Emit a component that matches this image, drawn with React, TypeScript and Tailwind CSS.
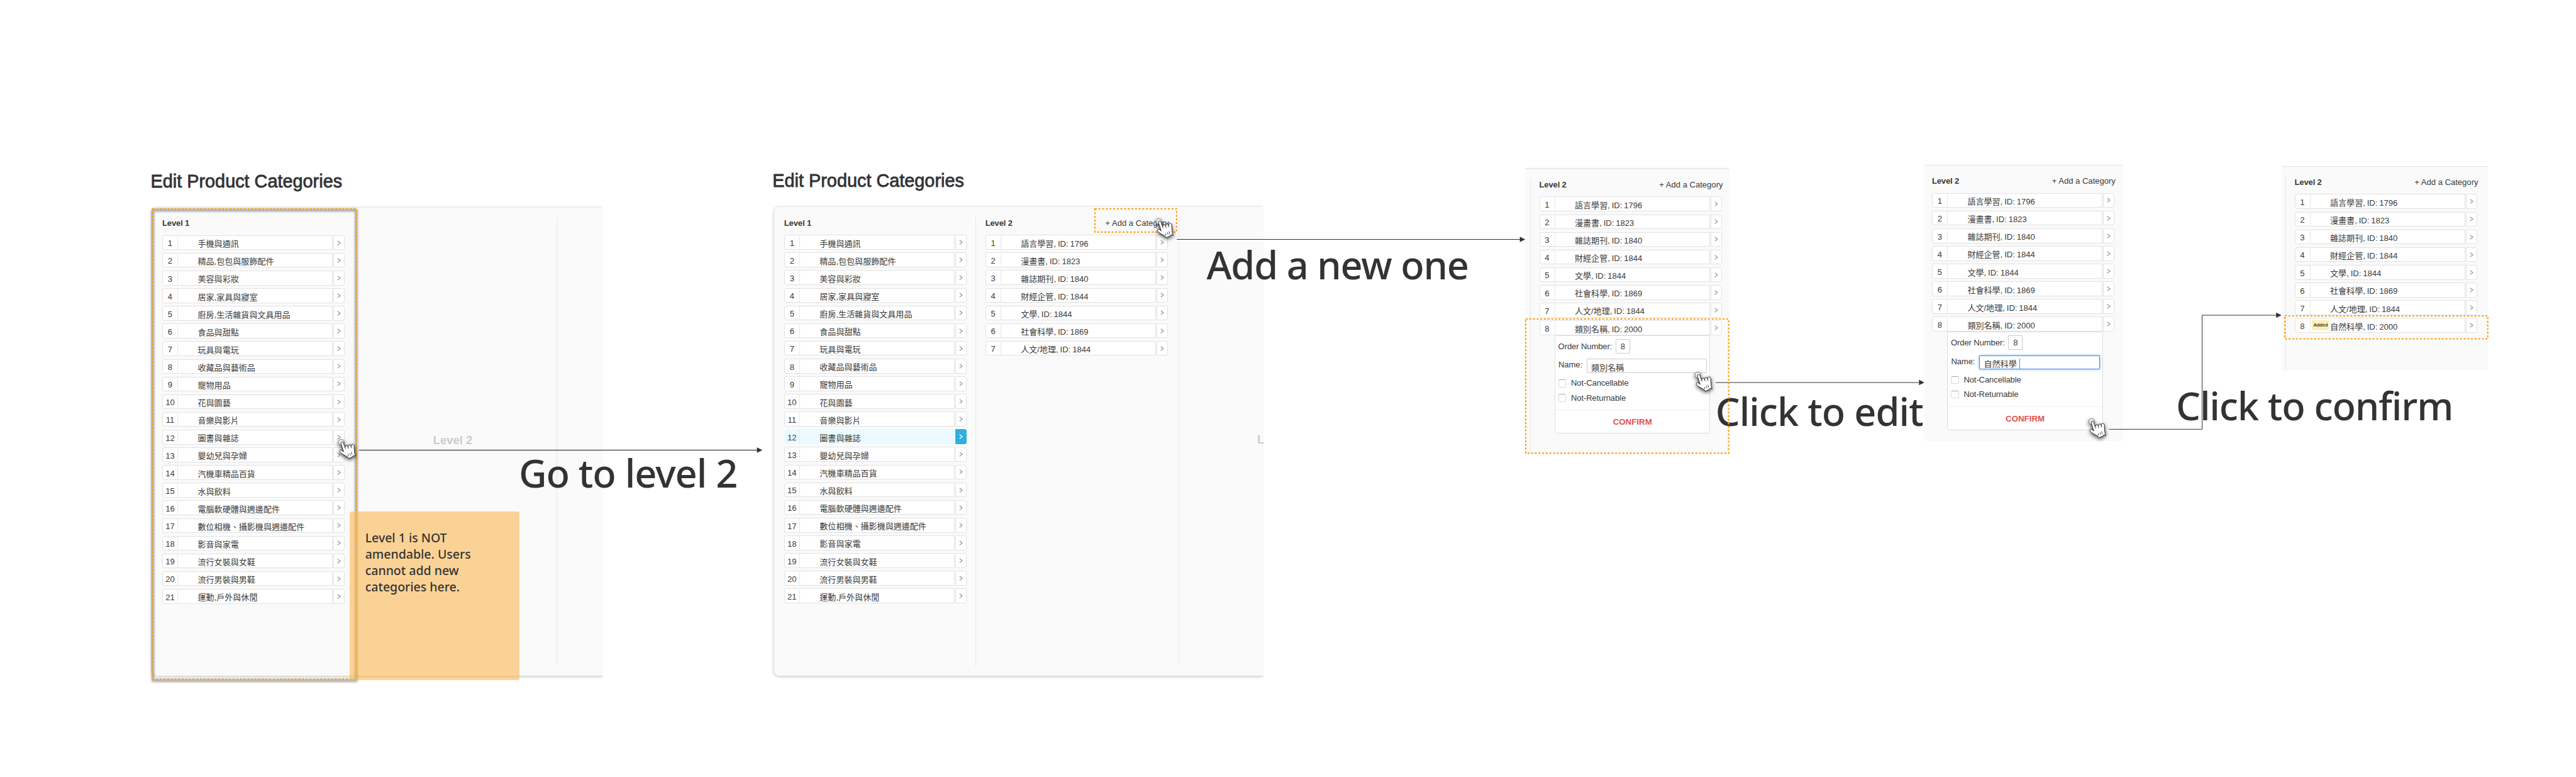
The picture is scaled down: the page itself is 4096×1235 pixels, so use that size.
import type { ReactNode } from "react";

const LEVEL_1 = [
  "手機與通訊",
  "精品,包包與服飾配件",
  "美容與彩妝",
  "居家,家具與寢室",
  "廚房,生活雜貨與文具用品",
  "食品與甜點",
  "玩具與電玩",
  "收藏品與藝術品",
  "寵物用品",
  "花與園藝",
  "音樂與影片",
  "圖書與雜誌",
  "嬰幼兒與孕婦",
  "汽機車精品百貨",
  "水與飲料",
  "電腦軟硬體與週邊配件",
  "數位相機、攝影機與週邊配件",
  "影音與家電",
  "流行女裝與女鞋",
  "流行男裝與男鞋",
  "運動,戶外與休閒",
];

const LEVEL_2 = [
  "語言學習, ID: 1796",
  "漫畫書, ID: 1823",
  "雜誌期刊, ID: 1840",
  "財經企管, ID: 1844",
  "文學, ID: 1844",
  "社會科學, ID: 1869",
  "人文/地理, ID: 1844",
];

function Chevron() {
  return (
    <svg viewBox="0 0 6 8" className="h-[8px] w-[6px]" fill="none" stroke="currentColor" strokeWidth="1.4">
      <path d="M0.8 0.7 L5 4 L0.8 7.3" />
    </svg>
  );
}

type RowProps = { n: number; name: string; selected?: boolean; badge?: string };

function Row({ n, name, selected = false, badge }: RowProps) {
  const main = selected ? "border-[#eafaff] bg-[#eafaff]" : "border-[#e2e2e2] bg-white";
  const divider = selected ? "border-[#e0f4fa]" : "border-[#e8e8e8]";
  const arrow = selected ? "border-[#2fafdd] bg-[#2fafdd] text-white" : "border-[#e2e2e2] bg-white text-[#9a9a9a]";
  return (
    <div className="flex h-[23.6px] shrink-0 gap-px">
      <div className={`flex min-w-0 flex-1 rounded-l-[3px] border ${main}`}>
        <div className={`w-[24px] shrink-0 border-r pt-[1.6px] text-center leading-[21px] ${divider}`}>{n}</div>
        <div className="flex w-[31.5px] shrink-0 items-center justify-end pr-[1.6px]">
          {badge && (
            <span className="h-[16px] w-[27px] rounded-[2px] bg-[#feeeb4] text-center text-[7.4px] leading-[16px] font-bold">
              {badge}
            </span>
          )}
        </div>
        <div className="pt-[2.4px] leading-[21px] whitespace-nowrap [word-spacing:-0.7px]">{name}</div>
      </div>
      <div className={`flex w-[17.6px] items-center justify-center rounded-r-[3px] border ${arrow}`}>
        <Chevron />
      </div>
    </div>
  );
}

function ColumnHeader({ title, action = false }: { title: string; action?: boolean }) {
  return (
    <div className="flex h-[28.6px] shrink-0 justify-between leading-5 whitespace-nowrap">
      <span className="font-bold tracking-[-0.15px]">{title}</span>
      {action && <span className="-mr-[2px]">+ Add a Category</span>}
    </div>
  );
}

function Rows({ names, selected, children }: { names: string[]; selected?: number; children?: ReactNode }) {
  return (
    <div className="flex flex-col gap-[4.52px]">
      {names.map((name, i) => (
        <Row key={name} n={i + 1} name={name} selected={selected === i + 1} />
      ))}
      {children}
    </div>
  );
}

function Checkbox({ label }: { label: string }) {
  return (
    <div className="flex h-[12.2px] items-center">
      <span className="h-[12.4px] w-[12.4px] rounded-[2px] border border-[#d9d9d9] border-t-[#a8a8a8] bg-white" />
      <span className="ml-[7.6px] leading-[12px] tracking-[-0.1px]">{label}</span>
    </div>
  );
}

function EditForm({ value, focused = false }: { value: string; focused?: boolean }) {
  const field = focused ? "border-[#3d8fe6] shadow-[0_0_4px_#7db9f5]" : "border-[#cccccc]";
  return (
    <div className="ml-[24.5px] flex h-[156.6px] w-[247.4px] flex-col rounded-b-[3px] border border-[#dedede] bg-white">
      <div className="mt-[5.4px] flex h-[22.8px] shrink-0 gap-[5.6px] pl-[4.6px]">
        <span className="pt-px leading-[22px] tracking-[-0.1px]">Order Number:</span>
        <span className="w-[23px] rounded-[1px] border border-[#cccccc] text-center leading-[22px]">8</span>
      </div>
      <div className="mt-[8.5px] flex h-[22.6px] shrink-0 pl-[5px]">
        <span className="w-[45.1px] leading-[19px] tracking-[-0.1px]">Name:</span>
        <span className={`flex w-[191.4px] items-start rounded-[1px] border bg-white pt-[2.5px] pl-[6px] leading-[21px] ${field}`}>
          {value}
          {focused && <span className="mt-[1.5px] ml-[4px] h-[17px] w-px bg-[#888888]" />}
        </span>
      </div>
      <div className="mt-[10.3px] flex shrink-0 flex-col gap-[11px] pl-[5px]">
        <Checkbox label="Not-Cancellable" />
        <Checkbox label="Not-Returnable" />
      </div>
      <div className="mt-[12.5px] flex flex-1 items-center justify-center border-t border-[#eeeeee] pt-[2px] text-[13.3px] leading-5 font-bold text-[#e0544f]">
        CONFIRM
      </div>
    </div>
  );
}

function Title() {
  return (
    <h1 className="-ml-[2.5px] h-[60px] text-[28.8px] leading-[36px] tracking-[0.02px] whitespace-nowrap text-[#333333] [-webkit-text-stroke:0.8px_#333333]">
      Edit Product Categories
    </h1>
  );
}

function Placeholder() {
  return <span className="text-[18.4px] leading-6 font-bold whitespace-nowrap text-[#cccccc]">Level 2</span>;
}

function Panel({ children }: { children: ReactNode }) {
  return (
    <div className="[clip-path:inset(-12px_0_-12px_-12px)]">
      <div className="flex h-[744.6px] overflow-hidden rounded-l-[8px] bg-[#fafafa] shadow-[0_1px_5px_rgba(0,0,0,0.28)]">
        {children}
      </div>
    </div>
  );
}

function Callout({ className, children }: { className: string; children: ReactNode }) {
  return (
    <p className={`absolute font-['Noto_Sans',sans-serif] text-[61.3px] leading-[80px] font-medium whitespace-nowrap text-[#333333] ${className}`}>
      {children}
    </p>
  );
}

function Highlight({ className, w, h }: { className: string; w: number; h: number }) {
  return (
    <svg className={`absolute overflow-visible ${className}`} width={w} height={h} fill="none">
      <rect width={w} height={h} stroke="#ff9d0a" strokeWidth="2.2" strokeDasharray="3 2.8" />
    </svg>
  );
}

function Hand({ className }: { className: string }) {
  return (
    <svg
      viewBox="610 165 150 160"
      className={`absolute h-[34.5px] w-[32.3px] overflow-visible drop-shadow-[0_2px_3px_rgba(0,0,0,0.75)] ${className}`}
      strokeLinejoin="round"
      strokeLinecap="round"
    >
      <circle cx="636" cy="193" r="21" fill="#ffffff" fillOpacity="0.75" stroke="#555555" strokeWidth="3.5" />
      <path
        d="M634 203 C632 194 636 190 642 190 C648 190 651 194 653 200 L664 231 C665 222 669 218 676 218 C682 218 685 222 687 228 C687 217 690 212 697 211 C703 211 706 216 708 222 C708 213 712 208 719 208 C727 208 731 212 731 219 L734 262 C735 274 737 283 742 295 L727 291 L720 300 L691 313 C687 305 684 301 678 298 C664 292 648 283 636 273 C628 266 624 262 626 256 C628 250 635 248 642 252 L652 262 Z"
        fill="#ffffff"
        stroke="#1c1c1c"
        strokeWidth="4.5"
      />
      <path d="M664 231 L667 240 M687 228 L690 238 M708 222 L711 234 M685 283 L688 294 M699 275 C702 280 703 284 704 289 M711 267 C714 273 715 277 715 282" fill="none" stroke="#1c1c1c" strokeWidth="4" />
    </svg>
  );
}

function Board({ className, children }: { className: string; children: ReactNode }) {
  return (
    <section className={`absolute flex flex-col border-t border-[#e2e2e2] bg-[#fafafa] ${className}`}>{children}</section>
  );
}

function Connectors() {
  return (
    <svg className="pointer-events-none absolute inset-0 h-full w-full" fill="none" stroke="#333333" strokeWidth="1">
      <path d="M570.7 715.5 H1204" stroke="#5a5658" strokeWidth="1.3" />
      <path d="M1871.3 380.5 H2417" />
      <path d="M2728.1 608 H3051" />
      <path d="M3353.2 682.3 H3501.5 V501 H3620" />
      <g fill="#333333" stroke="none">
        <path d="M1203.6 711.1 L1212.2 715.4 L1203.6 719.7 Z" />
        <path d="M2416.6 376.2 L2425.2 380.5 L2416.6 384.8 Z" />
        <path d="M3051.3 603.6 L3059.9 607.9 L3051.3 612.2 Z" />
        <path d="M3619.2 496.7 L3627.8 501 L3619.2 505.3 Z" />
      </g>
    </svg>
  );
}

export default function App() {
  return (
    <main className="relative h-[1235px] w-[4096px] overflow-hidden bg-white font-['Liberation_Sans','Noto_Sans_CJK_TC',sans-serif] text-[13.05px] text-[#3a3a3a]">
      {/* Step 1: level 1 list */}
      <section className="absolute top-[269.8px] left-[242px] w-[741px] pr-[24px]">
        <Title />
        <Panel>
          <div className="my-[15.4px] flex w-[325px] shrink-0 flex-col pl-[16px]">
            <div className="w-[290px]">
              <ColumnHeader title="Level 1" />
              <Rows names={LEVEL_1} />
            </div>
          </div>
          <div className="my-4 flex w-[319px] shrink-0 items-center justify-center border-r border-[#e8e8e8]">
            <div className="pr-[12px] pb-[4px]">
              <Placeholder />
            </div>
          </div>
        </Panel>
      </section>

      <svg className="absolute top-[332px] left-[243px] overflow-visible blur-[1.5px]" width="323.4" height="747.7" fill="none">
        <rect y="2" width="323.4" height="747.7" rx="1" stroke="#000000" strokeOpacity="0.3" strokeWidth="5" />
      </svg>
      <Highlight className="top-[332px] left-[243px]" w={323.4} h={747.7} />

      <aside className="absolute top-[812.6px] left-[555.7px] h-[268px] w-[270px] rounded-[3px] bg-[rgba(252,183,82,0.6)] pt-[29px] pl-[25px]">
        <p className="w-[200px] font-['Noto_Sans',sans-serif] text-[19.5px] leading-[26.2px] font-medium text-[#333333]">
          Level 1 is NOT
          <br />
          amendable. Users
          <br />
          cannot add new
          <br />
          categories here.
        </p>
      </aside>

      {/* Step 2: level 2 list opened */}
      <section className="absolute top-[269.4px] left-[1230.8px] w-[778.3px]">
        <Title />
        <Panel>
          <div className="my-[15.2px] flex w-[321.6px] shrink-0 flex-col border-r border-[#e8e8e8] pl-[16px]">
            <div className="w-[290px]">
              <ColumnHeader title="Level 1" />
              <Rows names={LEVEL_1} selected={12} />
            </div>
          </div>
          <div className="my-[15.2px] flex w-[322.5px] shrink-0 flex-col border-r border-[#e8e8e8] pl-[14.3px]">
            <div className="w-[290px]">
              <ColumnHeader title="Level 2" action />
              <Rows names={LEVEL_2} />
            </div>
          </div>
          <div className="flex shrink-0 items-center pb-[6px] pl-[124px]">
            <Placeholder />
          </div>
        </Panel>
      </section>
      <Highlight className="top-[331.5px] left-[1740.8px]" w={129.8} h={36.8} />

      {/* Step 3: new category form */}
      <Board className="top-[267.8px] left-[2425px] h-[452.6px] w-[324.7px] pl-[8px] shadow-[0_-2px_2px_-1px_rgba(0,0,0,0.08)]">
        <div className="mt-4 flex flex-1 border-l border-[#e8e8e8] pl-[13.5px]">
          <div className="-mt-px w-[290px]">
            <ColumnHeader title="Level 2" action />
            <Rows names={LEVEL_2}>
              <div>
                <Row n={8} name="類別名稱, ID: 2000" />
                <EditForm value="類別名稱" />
              </div>
            </Rows>
          </div>
        </div>
      </Board>

      {/* Step 4: name being edited */}
      <Board className="top-[262.1px] left-[3059.9px] h-[439.2px] w-[316px] pt-[15px] pl-[12px]">
        <div className="w-[290px]">
          <ColumnHeader title="Level 2" action />
          <Rows names={LEVEL_2}>
            <div>
              <Row n={8} name="類別名稱, ID: 2000" />
              <EditForm value="自然科學" focused />
            </div>
          </Rows>
        </div>
      </Board>

      {/* Step 5: category added */}
      <Board className="top-[263.9px] left-[3628px] h-[325.2px] w-[328.4px] pl-[6px]">
        <div className="mt-4 flex flex-1 border-l border-[#e8e8e8] pl-[13.5px]">
          <div className="-mt-px w-[290px]">
            <ColumnHeader title="Level 2" action />
            <Rows names={LEVEL_2}>
              <Row n={8} name="自然科學, ID: 2000" badge="Added" />
            </Rows>
          </div>
        </div>
      </Board>
      <Highlight className="top-[502.1px] left-[3632.8px]" w={322.7} h={36.5} />

      <Connectors />

      <Callout className="top-[710.8px] left-[824.9px] tracking-[-1px]">Go to level 2</Callout>
      <Callout className="top-[379.9px] left-[1918.4px] tracking-[-1.2px]">Add a new one</Callout>
      <Callout className="top-[612.7px] left-[2727.7px] tracking-[-0.95px]">Click to edit</Callout>
      <Callout className="top-[604.3px] left-[3460.1px] tracking-[-1.1px]">Click to confirm</Callout>
      <Highlight className="top-[506.7px] left-[2426.1px]" w={322.6} h={213.3} />

      <Hand className="top-[697.4px] left-[537px]" />
      <Hand className="top-[345.7px] left-[1837.2px]" />
      <Hand className="top-[589.8px] left-[2694.3px]" />
      <Hand className="top-[663.9px] left-[3319.5px]" />
    </main>
  );
}
